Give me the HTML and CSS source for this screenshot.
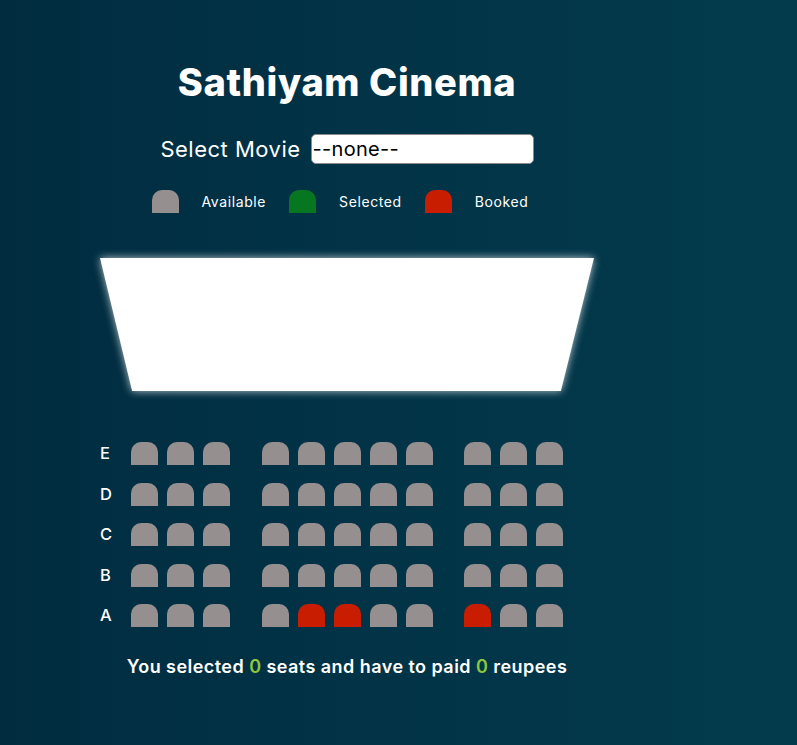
FILE: index.html
```html
<!DOCTYPE html>
<html lang="en">
<head>
<meta charset="utf-8">
<title>Sathiyam Cinema</title>
<link rel="stylesheet" href="styles.css">
</head>
<body>
<main class="app">
  <h1 class="title">Sathiyam Cinema</h1>
  <div class="picker">
    <label class="picker-label" for="movie">Select Movie</label>
    <select id="movie" class="picker-select">
      <option>--none--</option>
    </select>
  </div>
  <ul class="legend">
    <li class="legend-item"><span class="seat"></span><span class="legend-text">Available</span></li>
    <li class="legend-item"><span class="seat seat-selected"></span><span class="legend-text">Selected</span></li>
    <li class="legend-item"><span class="seat seat-booked"></span><span class="legend-text">Booked</span></li>
  </ul>
  <div class="screen-wrap"><div class="screen"></div></div>
  <div class="hall">
    <div class="row"><span class="row-label">E</span><div class="group"><span class="seat"></span><span class="seat"></span><span class="seat"></span></div><div class="group"><span class="seat"></span><span class="seat"></span><span class="seat"></span><span class="seat"></span><span class="seat"></span></div><div class="group"><span class="seat"></span><span class="seat"></span><span class="seat"></span></div></div>
    <div class="row"><span class="row-label">D</span><div class="group"><span class="seat"></span><span class="seat"></span><span class="seat"></span></div><div class="group"><span class="seat"></span><span class="seat"></span><span class="seat"></span><span class="seat"></span><span class="seat"></span></div><div class="group"><span class="seat"></span><span class="seat"></span><span class="seat"></span></div></div>
    <div class="row"><span class="row-label">C</span><div class="group"><span class="seat"></span><span class="seat"></span><span class="seat"></span></div><div class="group"><span class="seat"></span><span class="seat"></span><span class="seat"></span><span class="seat"></span><span class="seat"></span></div><div class="group"><span class="seat"></span><span class="seat"></span><span class="seat"></span></div></div>
    <div class="row"><span class="row-label">B</span><div class="group"><span class="seat"></span><span class="seat"></span><span class="seat"></span></div><div class="group"><span class="seat"></span><span class="seat"></span><span class="seat"></span><span class="seat"></span><span class="seat"></span></div><div class="group"><span class="seat"></span><span class="seat"></span><span class="seat"></span></div></div>
    <div class="row"><span class="row-label">A</span><div class="group"><span class="seat"></span><span class="seat"></span><span class="seat"></span></div><div class="group"><span class="seat"></span><span class="seat seat-booked"></span><span class="seat seat-booked"></span><span class="seat"></span><span class="seat"></span></div><div class="group"><span class="seat seat-booked"></span><span class="seat"></span><span class="seat"></span></div></div>
  </div>
  <p class="summary">You selected <span class="count">0</span> seats and have to paid <span class="count">0</span> reupees</p>
</main>
</body>
</html>
```

FILE: styles.css
```css
* { box-sizing: border-box; }

html, body {
  margin: 0;
  height: 100%;
}

body {
  background: linear-gradient(to right, #012c40, #033b4d);
  color: #ffffff;
  font-family: Inter, "Open Sans", sans-serif;
}

.app {
  width: 694px;
  display: flex;
  flex-direction: column;
  align-items: center;
  padding-top: 59px;
}

.title {
  margin: 0;
  font-size: 38px;
  font-weight: 800;
  line-height: 46px;
  letter-spacing: 0.6px;
}

.picker {
  display: flex;
  align-items: center;
  gap: 10px;
  margin-top: 29px;
}

.picker-label {
  font-size: 22px;
  font-weight: 400;
  letter-spacing: 0.5px;
}

.picker-select {
  appearance: none;
  -webkit-appearance: none;
  width: 223px;
  height: 30px;
  padding: 0 0 0 1px;
  border: 1px solid #8a8a8a;
  border-radius: 5px;
  background: #ffffff;
  color: #000000;
  font-family: Inter, sans-serif;
  font-size: 20px;
  line-height: 28px;
  letter-spacing: 0.3px;
}

.legend {
  list-style: none;
  display: flex;
  gap: 23px;
  margin: 26px 14px 0 0;
  padding: 0;
}

.legend-item {
  display: flex;
  align-items: center;
  gap: 23px;
}

.legend-text {
  font-size: 14px;
  letter-spacing: 0.6px;
}

.seat {
  display: block;
  width: 27px;
  height: 23px;
  background: #968f8f;
  border-top-left-radius: 10px;
  border-top-right-radius: 10px;
}

.seat-selected { background: #067720; }
.seat-booked { background: #c81d00; }

.screen-wrap {
  margin-top: 45px;
  filter: drop-shadow(0 0 4px rgba(255, 255, 255, 0.75));
}

.screen {
  width: 494px;
  height: 133px;
  background: #ffffff;
  clip-path: polygon(0 0, 100% 0, 93.3% 100%, 6.5% 100%);
}

.hall {
  width: 494px;
  margin-top: 51px;
  display: flex;
  flex-direction: column;
  gap: 17.5px;
}

.row {
  display: flex;
  align-items: center;
  gap: 32px;
  padding-right: 31px;
}

.row-label {
  width: 0;
  margin-right: -1px;
  font-size: 16.5px;
  font-weight: 500;
  line-height: 23px;
}

.row .group:last-child { margin-left: -1px; }

.group {
  display: flex;
  gap: 9px;
}

.summary {
  margin: 28px 0 0;
  font-size: 18px;
  font-weight: 600;
  line-height: 24px;
  letter-spacing: 0.45px;
}

.count { color: #8cc63f; }
```
